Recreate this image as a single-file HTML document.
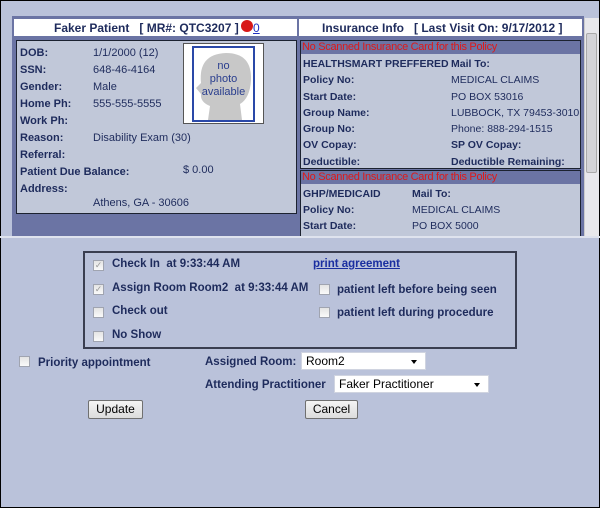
<!DOCTYPE html>
<html><head><style>
*{margin:0;padding:0;box-sizing:border-box}
body{width:600px;height:508px;position:relative;background:#bac2da;font-family:"Liberation Sans",Arial,sans-serif;font-size:11px;color:#1e2b5c;overflow:hidden}
.a{position:absolute;white-space:nowrap}
.b{font-weight:bold}
.cb{position:absolute;width:11px;height:11px;border:1px solid #a0a4b0;background:linear-gradient(#e4e4e4,#fafafa);font-size:9px;line-height:9px;color:#999;text-align:center}
.sel{position:absolute;background:#fff;border:1px solid #d0d4e0;font-size:12px;color:#000;padding:1px 4px;line-height:15px}
.sel:after{content:"";position:absolute;right:8px;top:7px;border:3px solid transparent;border-top:4px solid #000}
.btn{position:absolute;height:19px;border:1px solid #707070;border-radius:2px;background:linear-gradient(#f4f4f4,#dcdcdc);font-size:12px;color:#000;text-align:center;line-height:17px}
.bt{font-size:11.5px;line-height:14px}
</style></head><body>
<div class="a" style="left:0;top:0;width:600px;height:508px;border:1px solid #000"></div>
<div class="a" style="left:12px;top:16px;width:572px;height:221px;background:#6b74a4"></div>
<div class="a" style="left:14px;top:19px;width:283px;height:17px;background:#fff"></div>
<div class="a b" style="left:54px;top:21px;font-size:12px">Faker Patient &nbsp;&nbsp;[ MR#: QTC3207 ]</div>
<div class="a" style="left:241px;top:20px;width:12px;height:12px;border-radius:50%;background:#d81818"></div>
<div class="a" style="left:253px;top:21px;font-size:12px;color:#2030c0;text-decoration:underline">0</div>
<div class="a" style="left:16px;top:40px;width:281px;height:174px;background:#c1c8d9;border:1px solid #1c2230"></div>
<div class="a b" style="left:20px;top:45px;line-height:17px">DOB:<br>SSN:<br>Gender:<br>Home Ph:<br>Work Ph:<br>Reason:<br>Referral:<br>Patient Due Balance:<br>Address:</div>
<div class="a" style="left:93px;top:45px;line-height:17px">1/1/2000 (12)<br>648-46-4164<br>Male<br>555-555-5555<br><br>Disability Exam (30)</div>
<div class="a" style="left:183px;top:164px">$ 0.00</div>
<div class="a" style="left:93px;top:197px">Athens, GA - 30606</div>
<div class="a" style="left:183px;top:43px;width:81px;height:81px;background:#fff;border:1px solid #555"></div>
<div class="a" style="left:192px;top:46px;width:63px;height:76px;border:2px solid #2a48a8;background:#fff;overflow:hidden">
<svg width="60" height="72" viewBox="0 0 60 72"><path d="M14 72 L16 58 Q6 54 7 46 L2 40 L7 35 Q4 6 32 5 Q58 5 57 32 Q56 50 46 56 L48 72Z" fill="#c8c8c8"/></svg></div>
<div class="a" style="left:192px;top:60px;width:63px;text-align:center;color:#2a3e8e;line-height:13px;font-size:11px">no<br>photo<br>available</div>
<div class="a" style="left:299px;top:19px;width:283px;height:17px;background:#fff"></div>
<div class="a b" style="left:322px;top:21px;font-size:12px">Insurance Info &nbsp;&nbsp;[ Last Visit On: 9/17/2012 ]</div>
<div class="a" style="left:300px;top:40px;width:281px;height:129px;background:#c1c8d9;border:1px solid #1c2230"></div>
<div class="a" style="left:301px;top:41px;width:279px;height:13px;background:#6b74a4"></div>
<div class="a" style="left:302px;top:41px;color:#e01818;letter-spacing:-0.3px">No Scanned Insurance Card for this Policy</div>
<div class="a b" style="left:303px;top:56px;line-height:16.3px;font-size:10.5px">HEALTHSMART PREFFERED<br>Policy No:<br>Start Date:<br>Group Name:<br>Group No:<br>OV Copay:<br>Deductible:</div>
<div class="a" style="left:451px;top:56px;line-height:16.3px;font-size:10.5px"><b>Mail To:</b><br>MEDICAL CLAIMS<br>PO BOX 53016<br>LUBBOCK, TX 79453-3010<br>Phone: 888-294-1515<br><b>SP OV Copay:</b><br><b>Deductible Remaining:</b></div>
<div class="a" style="left:300px;top:170px;width:281px;height:67px;background:#c1c8d9;border:1px solid #1c2230;border-bottom:none"></div>
<div class="a" style="left:301px;top:171px;width:279px;height:13px;background:#6b74a4"></div>
<div class="a" style="left:302px;top:171px;color:#e01818;letter-spacing:-0.3px">No Scanned Insurance Card for this Policy</div>
<div class="a b" style="left:303px;top:186px;line-height:16px;font-size:10.5px">GHP/MEDICAID<br>Policy No:<br>Start Date:</div>
<div class="a" style="left:412px;top:186px;line-height:16px;font-size:10.5px"><b>Mail To:</b><br>MEDICAL CLAIMS<br>PO BOX 5000</div>
<div class="a" style="left:584px;top:18px;width:15px;height:219px;background:#e8e8ec;border-left:1px solid #ccc"></div>
<div class="a" style="left:586px;top:33px;width:11px;height:140px;background:#d4d4d8;border:1px solid #aaa;border-radius:2px"></div>
<div class="a" style="left:0;top:236px;width:600px;height:2px;background:#dfe3ee"></div>
<div class="a" style="left:83px;top:251px;width:434px;height:98px;border:2px solid #3a3e50"></div>
<div class="cb" style="left:93px;top:260px">✓</div>
<div class="cb" style="left:93px;top:284px">✓</div>
<div class="cb" style="left:93px;top:307px"></div>
<div class="cb" style="left:93px;top:331px"></div>
<div class="a b bt" style="left:112px;top:257px">Check In &nbsp;at 9:33:44 AM</div>
<div class="a b bt" style="left:112px;top:281px">Assign Room Room2 &nbsp;at 9:33:44 AM</div>
<div class="a b bt" style="left:112px;top:304px">Check out</div>
<div class="a b bt" style="left:112px;top:328px">No Show</div>
<div class="a b bt" style="left:313px;top:257px;color:#1a2ea0;text-decoration:underline">print agreement</div>
<div class="cb" style="left:319px;top:284px"></div>
<div class="cb" style="left:319px;top:307px"></div>
<div class="a b bt" style="left:337px;top:283px">patient left before being seen</div>
<div class="a b bt" style="left:337px;top:306px">patient left during procedure</div>
<div class="cb" style="left:19px;top:356px"></div>
<div class="a b bt" style="left:38px;top:356px">Priority appointment</div>
<div class="a b bt" style="left:205px;top:355px">Assigned Room:</div>
<div class="sel" style="left:301px;top:352px;width:125px;height:18px">Room2</div>
<div class="a b bt" style="left:205px;top:378px">Attending Practitioner</div>
<div class="sel" style="left:334px;top:375px;width:155px;height:18px">Faker Practitioner</div>
<div class="btn" style="left:88px;top:400px;width:55px">Update</div>
<div class="btn" style="left:305px;top:400px;width:53px">Cancel</div>
</body></html>
